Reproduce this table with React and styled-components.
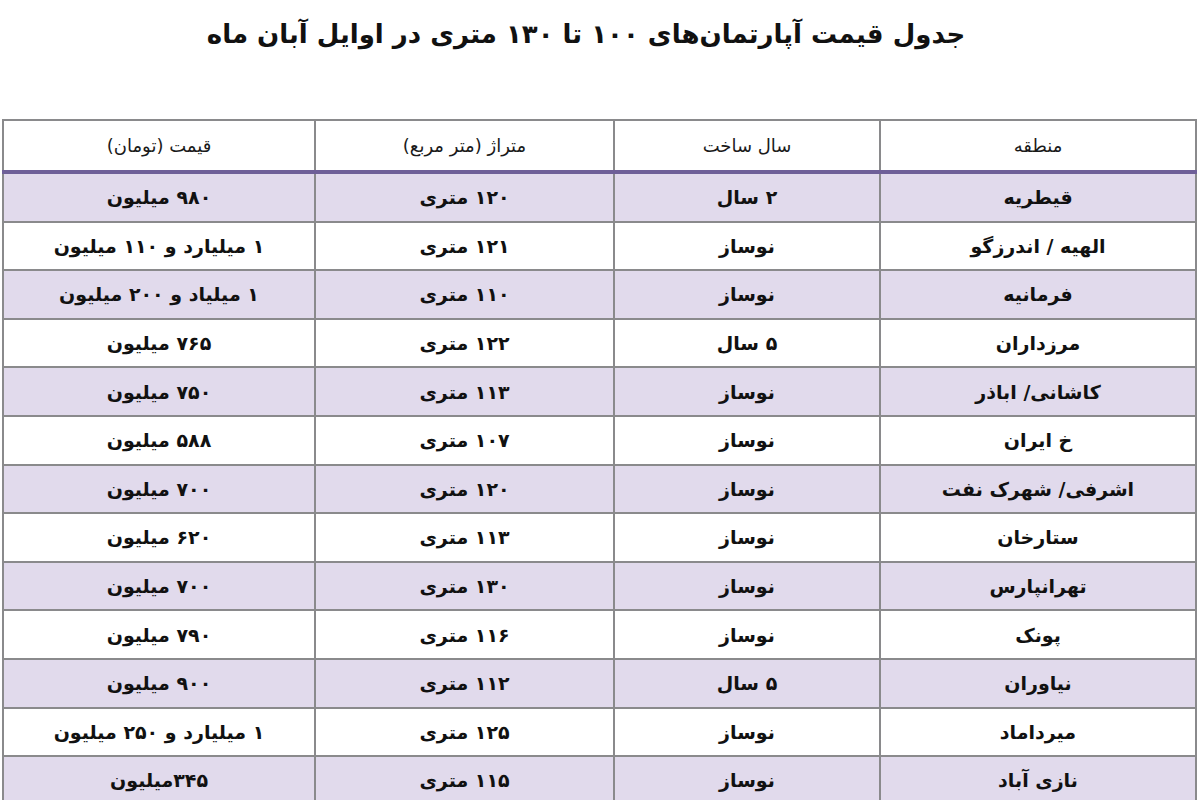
import React from "react";
import styled, { createGlobalStyle } from "styled-components";

const GlobalStyle = createGlobalStyle`
  html, body {
    margin: 0;
    padding: 0;
    background: #fff;
  }
  body {
    font-family: "DejaVu Sans", "Noto Sans", sans-serif;
    color: #111;
  }
`;

const Page = styled.div`
  width: 1200px;
  height: 800px;
  overflow: hidden;
  background: #fff;
  direction: rtl;
`;

const Title = styled.h1`
  margin: 0;
  height: 119px;
  padding-top: 19px;
  padding-right: 28px;
  box-sizing: border-box;
  text-align: center;
  font-size: 26px;
  font-weight: bold;
  color: #111;
`;

const Table = styled.table`
  margin: 0 3px 0 4px;
  width: 1193px;
  border-collapse: collapse;
  table-layout: fixed;
  border: 2px solid #8a8a8c;
`;

const HeadCell = styled.th`
  height: 47px;
  font-size: 18px;
  font-weight: normal;
  color: #1a1a1a;
  text-align: center;
  border-left: 2px solid #8a8a8c;
  border-bottom: 4px solid #6e5f98;
  background: #fff;
`;

const Row = styled.tr`
  background: ${(p) => (p.$shaded ? "#e1daec" : "#fff")};
`;

const Cell = styled.td`
  height: 44.6px;
  font-size: 19px;
  font-weight: bold;
  text-align: center;
  color: #111;
  border-left: 2px solid #8a8a8c;
  border-bottom: 2px solid #8a8a8c;
  white-space: nowrap;
`;

const widths = [316, 266, 299, 312];
const headers = ["منطقه", "سال ساخت", "متراژ (متر مربع)", "قیمت (تومان)"];

const rows = [
  ["قیطریه", "۲ سال", "۱۲۰ متری", "۹۸۰ میلیون"],
  ["الهیه / اندرزگو", "نوساز", "۱۲۱ متری", "۱ میلیارد و ۱۱۰ میلیون"],
  ["فرمانیه", "نوساز", "۱۱۰ متری", "۱ میلیاد و ۲۰۰ میلیون"],
  ["مرزداران", "۵ سال", "۱۲۲ متری", "۷۶۵ میلیون"],
  ["کاشانی/ اباذر", "نوساز", "۱۱۳  متری", "۷۵۰ میلیون"],
  ["خ ایران", "نوساز", "۱۰۷ متری", "۵۸۸ میلیون"],
  ["اشرفی/ شهرک نفت", "نوساز", "۱۲۰ متری", "۷۰۰ میلیون"],
  ["ستارخان", "نوساز", "۱۱۳ متری", "۶۲۰ میلیون"],
  ["تهرانپارس", "نوساز", "۱۳۰ متری", "۷۰۰ میلیون"],
  ["پونک", "نوساز", "۱۱۶ متری", "۷۹۰ میلیون"],
  ["نیاوران", "۵ سال", "۱۱۲ متری", "۹۰۰ میلیون"],
  ["میرداماد", "نوساز", "۱۲۵ متری", "۱ میلیارد و ۲۵۰ میلیون"],
  ["نازی آباد", "نوساز", "۱۱۵ متری", "۳۴۵میلیون"],
];

export default function App() {
  return (
    <Page>
      <GlobalStyle />
      <Title>جدول قیمت آپارتمان‌های ۱۰۰ تا ۱۳۰ متری در اوایل آبان ماه</Title>
      <Table>
        <colgroup>
          {widths.map((w, i) => (
            <col key={i} style={{ width: w }} />
          ))}
        </colgroup>
        <thead>
          <tr>
            {headers.map((h) => (
              <HeadCell key={h}>{h}</HeadCell>
            ))}
          </tr>
        </thead>
        <tbody>
          {rows.map((r, i) => (
            <Row key={i} $shaded={i % 2 === 0}>
              {r.map((c, j) => (
                <Cell key={j}>{c}</Cell>
              ))}
            </Row>
          ))}
        </tbody>
      </Table>
    </Page>
  );
}
